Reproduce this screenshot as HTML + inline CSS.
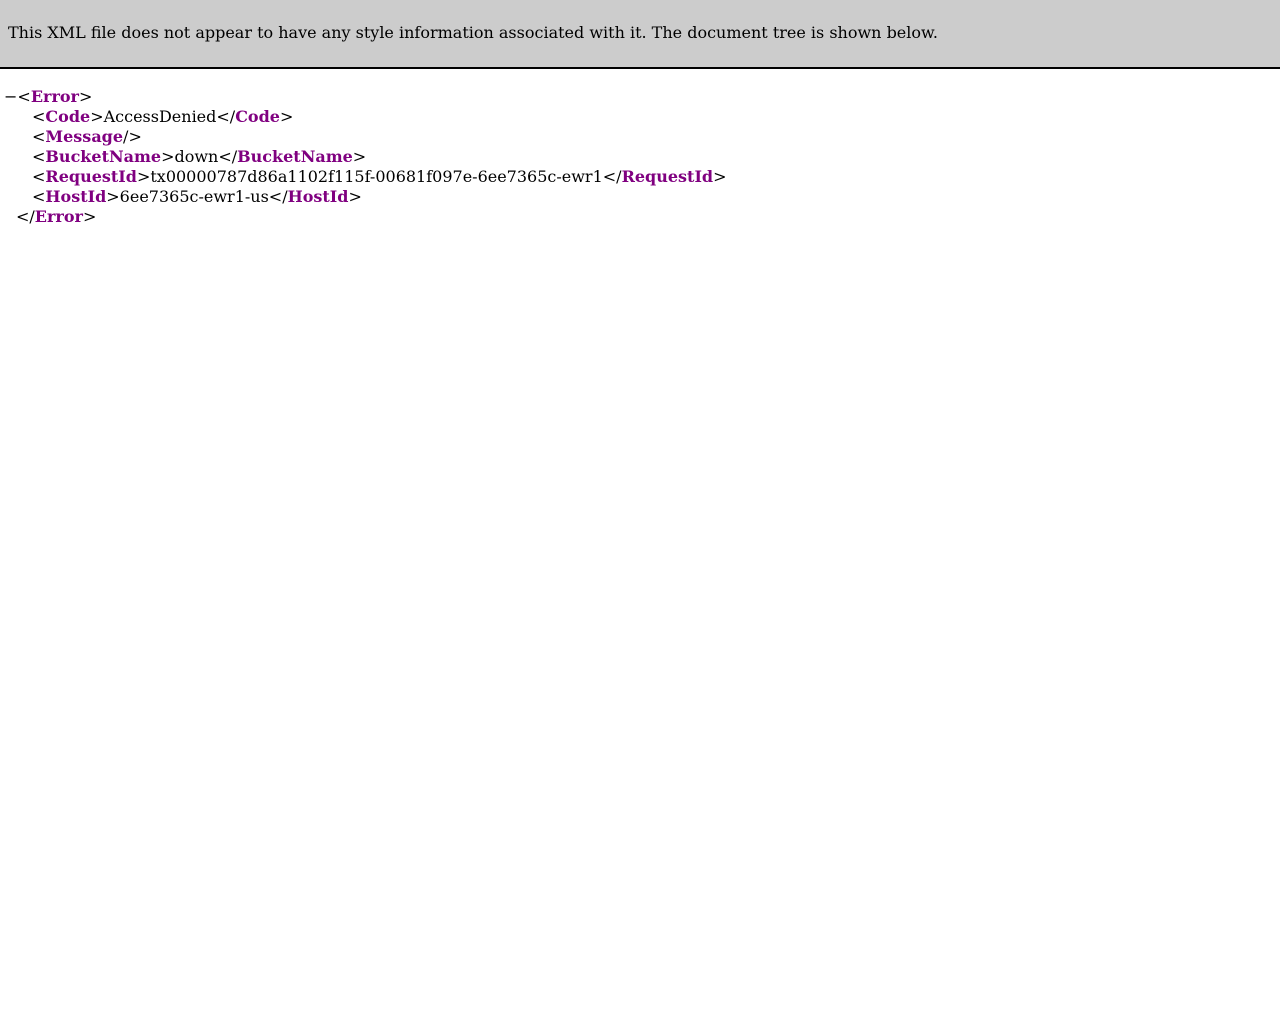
<!DOCTYPE html>
<html><head><meta charset="utf-8"><style>
body{margin:0;background:#fff;font-family:"DejaVu Serif",serif;font-size:16px;color:#000;}
.hdr{position:absolute;left:0;top:0;width:1280px;height:67px;background:#ccc;border-bottom:2px solid #000;}
.hdr span{position:absolute;left:8px;top:23px;line-height:20px;white-space:nowrap;}
.l{position:absolute;line-height:20px;white-space:nowrap;}
b{color:#800080;}
</style></head><body>
<div class="hdr"><span>This XML file does not appear to have any style information associated with it. The document tree is shown below.</span></div>
<div class="l" style="left:4px;top:87px">−&lt;<b>Error</b>&gt;</div>
<div class="l" style="left:32px;top:107px">&lt;<b>Code</b>&gt;AccessDenied&lt;/<b>Code</b>&gt;</div>
<div class="l" style="left:32px;top:127px">&lt;<b>Message</b>/&gt;</div>
<div class="l" style="left:32px;top:147px">&lt;<b>BucketName</b>&gt;down&lt;/<b>BucketName</b>&gt;</div>
<div class="l" style="left:32px;top:167px">&lt;<b>RequestId</b>&gt;tx00000787d86a1102f115f-00681f097e-6ee7365c-ewr1&lt;/<b>RequestId</b>&gt;</div>
<div class="l" style="left:32px;top:187px">&lt;<b>HostId</b>&gt;6ee7365c-ewr1-us&lt;/<b>HostId</b>&gt;</div>
<div class="l" style="left:16px;top:207px">&lt;/<b>Error</b>&gt;</div>
</body></html>
